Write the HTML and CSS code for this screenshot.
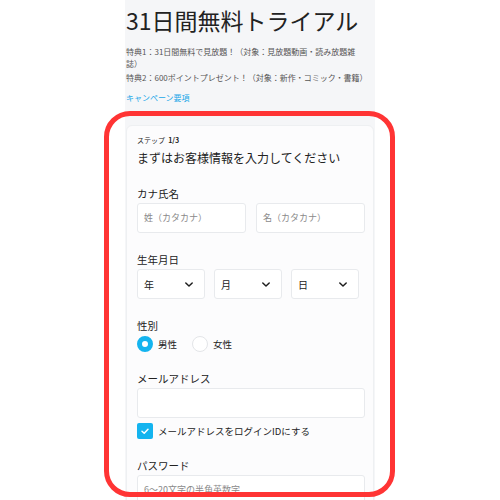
FILE: index.html
```html
<!DOCTYPE html>
<html lang="ja">
<head>
<meta charset="utf-8">
<link rel="stylesheet" href="styles.css">
</head>
<body>
<div class="page">
  <h1 class="title">31日間無料トライアル</h1>
  <p class="perk">特典1：31日間無料で見放題！（対象：見放題動画・読み放題雑<br>誌）</p>
  <p class="perk second">特典2：600ポイントプレゼント！（対象：新作・コミック・書籍）</p>
  <a class="link">キャンペーン要項</a>
  <div class="card">
    <div class="step">ステップ&nbsp; <b>1/3</b></div>
    <div class="lead">まずはお客様情報を入力してください</div>

    <div class="field first">
      <div class="label">カナ氏名</div>
      <div class="row2">
        <div class="input ph">姓（カタカナ）</div>
        <div class="input ph">名（カタカナ）</div>
      </div>
    </div>

    <div class="field">
      <div class="label">生年月日</div>
      <div class="row3">
        <div class="select"><span>年</span><svg class="chev" viewBox="0 0 10 6"><path d="M1 1 L5 5 L9 1" fill="none" stroke="#1e1e1e" stroke-width="1.8" stroke-linecap="round" stroke-linejoin="round"/></svg></div>
        <div class="select"><span>月</span><svg class="chev" viewBox="0 0 10 6"><path d="M1 1 L5 5 L9 1" fill="none" stroke="#1e1e1e" stroke-width="1.8" stroke-linecap="round" stroke-linejoin="round"/></svg></div>
        <div class="select"><span>日</span><svg class="chev" viewBox="0 0 10 6"><path d="M1 1 L5 5 L9 1" fill="none" stroke="#1e1e1e" stroke-width="1.8" stroke-linecap="round" stroke-linejoin="round"/></svg></div>
      </div>
    </div>

    <div class="field">
      <div class="label">性別</div>
      <div class="radios">
        <div class="radio"><span class="dot on"></span>男性</div>
        <div class="radio"><span class="dot"></span>女性</div>
      </div>
    </div>

    <div class="field">
      <div class="label">メールアドレス</div>
      <div class="input"></div>
      <div class="check"><span class="box"><svg viewBox="0 0 16 16"><path d="M5 8.3 L7.2 10.3 L11 6.2" fill="none" stroke="#fff" stroke-width="1.5" stroke-linecap="round" stroke-linejoin="round"/></svg></span>メールアドレスをログインIDにする</div>
    </div>

    <div class="field">
      <div class="label">パスワード</div>
      <div class="input ph">6〜20文字の半角英数字</div>
    </div>
  </div>
</div>
<div class="frame"></div>
</body>
</html>
```
FILE: styles.css
```css
html, body {
  margin: 0;
  padding: 0;
  background: #ffffff;
  font-family: "Noto Sans CJK JP", "Noto Sans", sans-serif;
  color: #222;
}
.page {
  width: 250px;
  height: 500px;
  margin: 0 auto;
  background: #f5f6f8;
  padding: 6px 1px 0 1px;
  box-sizing: border-box;
  overflow: hidden;
}
.title {
  margin: 0;
  font-size: 23px;
  font-weight: 400;
  line-height: 28px;
  white-space: nowrap;
}
.perk {
  margin: 12px 0 0 0;
  font-size: 8px;
  line-height: 12px;
  color: #555;
  white-space: nowrap;
}
.perk.second { margin-top: 2px; }
.link {
  display: block;
  margin-top: 8px;
  font-size: 8px;
  line-height: 12px;
  color: #1aa7e8;
}
.card {
  margin-top: 21px;
  background: #fcfcfd;
  border: 1px solid #eef0f2;
  border-radius: 6px;
  padding: 9px 8px 0 10px;
}
.step {
  font-size: 7px;
  line-height: 10px;
  color: #222;
}
.step b { font-weight: 700; }
.lead {
  margin-top: 5px;
  font-size: 12px;
  line-height: 16px;
}
.field { margin-top: 20px; }
.field.first { margin-top: 21px; }
.label {
  font-size: 10.5px;
  line-height: 14px;
  margin-bottom: 2px;
}
.row2 {
  display: grid;
  grid-template-columns: 1fr 1fr;
  gap: 10px;
}
.row3 {
  display: grid;
  grid-template-columns: 68px 68px 68px;
  gap: 9px;
}
.input {
  height: 30px;
  box-sizing: border-box;
  background: #fff;
  border: 1px solid #e8eaed;
  border-radius: 3px;
  font-size: 9px;
  line-height: 28px;
  padding: 0 6px;
}
.ph { color: #8a8a8a; }
.select {
  height: 30px;
  box-sizing: border-box;
  background: #fff;
  border: 1px solid #e8eaed;
  border-radius: 3px;
  display: flex;
  align-items: center;
  justify-content: space-between;
  padding: 0 11px 0 6px;
  font-size: 10px;
}
.chev { width: 8px; height: 5px; }
.radios {
  display: flex;
  gap: 15px;
  height: 17px;
  align-items: center;
}
.radio {
  display: flex;
  align-items: center;
  gap: 5px;
  font-size: 9.5px;
}
.dot {
  width: 16px;
  height: 16px;
  box-sizing: border-box;
  border-radius: 50%;
  border: 1px solid #e3e5e8;
  background: #fff;
}
.dot.on {
  border: 5px solid #14b4ef;
}
.check {
  display: flex;
  align-items: center;
  gap: 5px;
  font-size: 9.5px;
  margin-top: 5px;
}
.box {
  width: 16px;
  height: 16px;
  border-radius: 2px;
  background: #14b4ef;
  display: flex;
}
.box svg { width: 16px; height: 16px; }
.frame {
  position: absolute;
  left: 104px;
  top: 111px;
  width: 291px;
  height: 386px;
  box-sizing: border-box;
  border: 5px solid #ff3434;
  border-radius: 26px;
}
```
